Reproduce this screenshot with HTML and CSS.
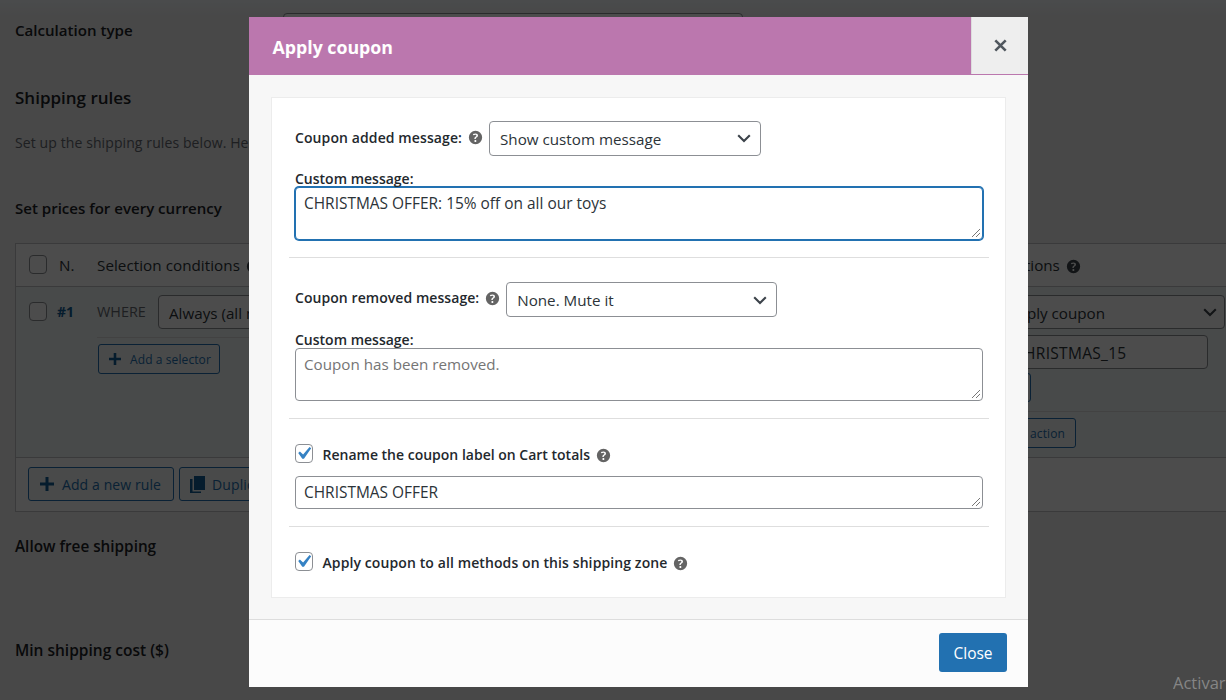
FILE: index.html
```
<!DOCTYPE html>
<html lang="en">
<head>
  <meta charset="UTF-8">
  <meta name="viewport" content="width=device-width, initial-scale=1.0">
  <title>Shipping rules</title>
  <link rel="stylesheet" href="styles.css">
</head>
<body>
  <!-- shared icons -->
  <svg class="sprite" width="0" height="0">
    <symbol id="help" viewBox="0 0 20 20">
      <path fill="currentColor" fill-rule="evenodd" d="M17 10a7 7 0 1 1-14 0 7 7 0 0 1 14 0zm-6.300 1.480h-1.900v-.390c0-.340.070-.640.210-.900.140-.250.420-.550.870-.890.420-.300.710-.550.830-.740.140-.190.200-.400.200-.640 0-.250-.090-.450-.280-.590-.190-.130-.450-.190-.790-.190-.580 0-1.250.190-2 .570l-.640-1.280c.870-.490 1.800-.740 2.770-.740.810 0 1.450.200 1.920.580.480.390.710.910.710 1.550 0 .430-.090.800-.290 1.110-.190.320-.570.670-1.110 1.060-.380.280-.610.490-.710.630-.100.150-.150.340-.150.570v.290zm-1.880 2.320c0-.350.100-.610.280-.790.180-.180.440-.270.780-.270.340 0 .600.090.780.270.180.180.280.450.280.790 0 .330-.100.590-.280.780-.180.180-.440.270-.780.270-.330 0-.590-.090-.780-.270-.180-.190-.280-.450-.280-.780z"/>
    </symbol>
    <symbol id="chevron" viewBox="0 0 14 9">
      <path fill="none" stroke="currentColor" stroke-width="2.100" d="M1.200 1.300 7 7l5.800-5.700"/>
    </symbol>
    <symbol id="plus" viewBox="0 0 14 14">
      <path fill="currentColor" d="M5.500 0h3v5.500H14v3H8.500V14h-3V8.500H0v-3h5.500z"/>
    </symbol>
    <symbol id="grip" viewBox="0 0 10 10">
      <path fill="none" stroke="currentColor" stroke-width="1" d="M1 9 9 1M5 9l4-4"/>
    </symbol>
    <symbol id="check" viewBox="0 0 20 20">
      <path fill="#3582c4" d="M14.830 4.890l1.340.940-5.810 8.380H9.020L5.780 9.670l1.340-1.250 2.570 2.400z"/>
    </symbol>
  </svg>

  <div class="page">
    <div class="field-row">
      <h3 class="calc">Calculation type</h3>
      <div class="calc-select"></div>
    </div>
    <h2>Shipping rules</h2>
    <p class="intro">Set up the shipping rules below. Here</p>
    <h3 class="currency">Set prices for every currency</h3>

    <div class="rules">
      <div class="rules-head">
        <div class="col-id"><span class="checkbox"></span><span class="num">N.</span></div>
        <div class="col-conditions">Selection conditions <svg class="help head-help"><use href="#help"/></svg></div>
        <div class="col-actions">Actions <svg class="help head-help"><use href="#help"/></svg></div>
      </div>
      <div class="rules-row">
        <div class="col-id"><span class="checkbox"></span><span class="rule-num">#1</span></div>
        <div class="col-conditions">
          <div class="line">
            <span class="where">WHERE</span>
            <div class="select always"><span>Always (all methods)</span></div>
          </div>
          <div class="split"></div>
          <div class="btn btn-small"><svg class="plus"><use href="#plus"/></svg>Add a selector</div>
        </div>
        <div class="col-actions">
          <div class="select action-select"><span>Apply coupon</span><svg class="chevron"><use href="#chevron"/></svg></div>
          <div class="input action-input">CHRISTMAS_15</div>
          <div class="btn btn-settings"></div>
          <div class="split"></div>
          <div class="btn btn-small btn-action">Add an action</div>
        </div>
      </div>
      <div class="rules-foot">
        <div class="btn"><svg class="plus"><use href="#plus"/></svg>Add a new rule</div>
        <div class="btn">
          <svg class="copy" viewBox="0 0 15 17"><path fill="currentColor" d="M4 0h11v14H4zM0 3h2.500v12.500H11V17H0z"/></svg>Duplicate
        </div>
      </div>
    </div>

    <h3 class="free">Allow free shipping</h3>
    <h3 class="min-cost">Min shipping cost ($)</h3>
  </div>

  <div class="overlay">
    <div class="modal">
      <div class="modal-header">
        <h1>Apply coupon</h1>
        <div class="modal-close">
          <svg width="13" height="13" viewBox="0 0 13 13"><path fill="none" stroke="#50575e" stroke-width="2.600" d="M1.300 1.300l10.400 10.400M11.700 1.300 1.300 11.700"/></svg>
        </div>
      </div>

      <div class="modal-body">
        <div class="card">
          <div class="group">
            <div class="line">
              <label class="wide">Coupon added message:</label>
              <svg class="help"><use href="#help"/></svg>
              <div class="select"><span>Show custom message</span><svg class="chevron"><use href="#chevron"/></svg></div>
            </div>
            <label class="custom">Custom message:</label>
            <div class="textarea focus"><span class="offer">CHRISTMAS OFFER: 15% off on all our toys</span><svg class="grip"><use href="#grip"/></svg></div>
          </div>

          <div class="group group-removed">
            <div class="line">
              <label>Coupon removed message:</label>
              <svg class="help"><use href="#help"/></svg>
              <div class="select"><span>None. Mute it</span><svg class="chevron"><use href="#chevron"/></svg></div>
            </div>
            <label class="custom">Custom message:</label>
            <div class="textarea"><span class="placeholder">Coupon has been removed.</span><svg class="grip"><use href="#grip"/></svg></div>
          </div>

          <div class="group group-rename">
            <div class="line">
              <span class="checkbox"><svg><use href="#check"/></svg></span>
              <label>Rename the coupon label on Cart totals</label>
              <svg class="help"><use href="#help"/></svg>
            </div>
            <div class="textarea single"><span class="offer">CHRISTMAS OFFER</span><svg class="grip"><use href="#grip"/></svg></div>
          </div>

          <div class="group group-all">
            <div class="line">
              <span class="checkbox"><svg><use href="#check"/></svg></span>
              <label class="wide">Apply coupon to all methods on this shipping zone</label>
              <svg class="help"><use href="#help"/></svg>
            </div>
          </div>
        </div>
      </div>

      <div class="modal-footer">
        <div class="btn-close">Close</div>
      </div>
    </div>
  </div>

  <div class="watermark">
    <div>Activar Windows</div>
    <small>Vaya a Configuración para activar Windows.</small>
  </div>
</body>
</html>
```
FILE: styles.css
```
* {
  box-sizing: border-box;
}
body {
  margin: 0;
  width: 1226px;
  height: 700px;
  overflow: hidden;
  background: #f0f0f1;
  color: #2c3338;
  font-family: "Open Sans", "Noto Sans", sans-serif;
  font-size: 15.2px;
  line-height: 20px;
}
h1, h2, h3, p {
  margin: 0;
}
svg {
  display: block;
  flex: none;
}
.sprite {
  position: absolute;
}

/* settings page */
.page {
  height: 700px;
  padding-left: 15px;
  overflow: hidden;
  display: flex;
  flex-direction: column;
  background: linear-gradient(#f8fcff, #f0f0f1 17px);
}
.page h2, .page h3 {
  color: #1d2327;
  font-weight: 600;
}
.page h3 {
  font-size: 15.2px;
}
.page h2 {
  font-size: 17px;
  margin-top: 47px;
}
.field-row {
  display: flex;
  height: 41px;
  flex: none;
}
.page .calc {
  width: 268px;
  padding-top: 20px;
  font-size: 15.100px;
}
.calc-select {
  width: 460px;
  height: 34px;
  margin-top: 13px;
  border: 1px solid #8c8f94;
  border-radius: 4px;
  background: #fff;
}
.intro {
  margin-top: 25px;
  font-size: 14px;
  letter-spacing: .1px;
  color: #646970;
}
.page .currency {
  margin-top: 45px;
  font-size: 15.050px;
}
.page .free {
  margin-top: 24px;
  font-size: 15.300px;
}
.page .min-cost {
  margin-top: 84px;
  font-size: 15.500px;
}

/* rules table */
.rules {
  flex: none;
  width: 1300px;
  margin-top: 25px;
  border: 1px solid #c3c4c7;
  background: #fff;
}
.rules-head, .rules-row {
  display: grid;
  grid-template-columns: 81px 873px 1fr;
}
.rules-head {
  height: 43px;
  align-items: center;
  border-bottom: 1px solid #c3c4c7;
}
.rules-row {
  height: 171px;
  padding-top: 8px;
  background: #f2f8f7;
  border-bottom: 1px solid #c3c4c7;
}
.rules-foot {
  display: flex;
  gap: 5px;
  height: 53px;
  padding: 9px 12px;
}
.col-id {
  display: flex;
  padding-left: 13px;
}
.num {
  padding-left: 12px;
}
.rules-row .col-id {
  padding-top: 7px;
}
.rule-num {
  padding-left: 10px;
  font-size: 14px;
  font-weight: 700;
  color: #135e96;
}
.rules-head .col-conditions, .rules-head .col-actions {
  display: flex;
  align-items: center;
}
.rules-head .col-conditions {
  letter-spacing: .05px;
}
.rules-head .col-actions {
  padding-left: 38px;
}
.help.head-help {
  width: 19px;
  height: 19px;
  margin: 2px 0 0 4px;
  color: #3c434a;
}
.rules-row .col-conditions .line {
  display: flex;
  align-items: center;
}
.where {
  width: 61px;
  font-size: 14.400px;
  color: #646970;
}
.split {
  height: 1px;
  background: #dcdcde;
}
.rules-row .col-conditions .split {
  margin: 8px 0 6px;
}
.always {
  width: 300px;
}
.action-select {
  width: 223px;
  margin-left: 32px;
}
.select.action-select {
  padding: 1px 7px 0 5px;
}
.input.action-input {
  width: 206px;
  margin: 6px 0 4px 32px;
  padding: 1px 0 0 11px;
  font-size: 15.500px;
  letter-spacing: .3px;
}
.btn.btn-settings {
  width: 29px;
  height: 29px;
  margin: 0 0 9px 32px;
}
.btn.btn-action {
  width: 106px;
  margin: 6px 0 0;
  justify-content: flex-end;
}

/* form controls */
.checkbox {
  flex: none;
  width: 18px;
  height: 19px;
  border: 1px solid #8c8f94;
  border-radius: 4px;
  background: #fff;
}
.checkbox svg {
  width: 25px;
  height: 25px;
  margin: -4px 0 0 -5px;
}
.select, .input {
  display: flex;
  align-items: center;
  height: 34px;
  padding: 1px 9px 0 10px;
  border: 1px solid #8c8f94;
  border-radius: 4px;
  background: #fff;
  white-space: nowrap;
}
.select {
  justify-content: space-between;
}
.chevron {
  width: 14px;
  height: 9px;
  margin-top: -1px;
  color: #3c434a;
}
.help {
  width: 19px;
  height: 19px;
  color: #646464;
}
.btn {
  display: flex;
  align-items: center;
  height: 34px;
  padding: 1px 12px 0 11px;
  border: 1px solid #2271b1;
  border-radius: 3px;
  color: #2271b1;
  background: #f6f7f7;
  font-size: 14px;
  letter-spacing: .1px;
  white-space: nowrap;
}
.plus {
  width: 14px;
  height: 14px;
  margin: -2px 8px 0 0;
  color: #135e96;
}
.copy {
  width: 15px;
  height: 17px;
  margin: 0 7px 0 -1px;
  color: #135e96;
}
.btn-small {
  width: 122px;
  height: 30px;
  padding: 1px 10px 0 10px;
  font-size: 12px;
}
.rules-row .col-conditions .btn-small {
  margin-left: 1px;
}
.btn-small .plus {
  width: 12px;
  height: 12px;
  margin: -2px 9px 0 0;
}

/* modal */
.overlay {
  position: absolute;
  top: 0;
  left: 0;
  width: 1226px;
  height: 700px;
  padding: 17px 0 0 249px;
  background: rgba(0, 0, 0, .7);
}
.modal {
  width: 779px;
  height: 670px;
  display: flex;
  flex-direction: column;
  background: #f7f7f7;
}
.modal-header {
  display: flex;
  justify-content: space-between;
  height: 58px;
  background: #bb77ae;
  border-bottom: 1px solid #bb77ae;
}
.modal-header h1 {
  padding: 20px 0 0 23.500px;
  font-size: 17.750px;
  font-weight: 700;
  color: #fff;
}
.modal-close {
  display: flex;
  align-items: center;
  justify-content: center;
  width: 57px;
  background: #eee;
  border-left: 1px solid #ddd;
}
.modal-body {
  height: 544px;
  padding: 22px;
}
.card {
  height: 501px;
  padding: 23px 16px 0 17px;
  background: #fff;
  border: 1px solid #ececec;
}
.group {
  height: 137px;
  padding: 0 6px;
  border-bottom: 1px solid #dedede;
}
.group .line {
  display: flex;
}
.group label {
  display: block;
  font-size: 14px;
  font-weight: 600;
  color: #23282d;
}
.group label.wide {
  letter-spacing: .1px;
}
.group .line label {
  margin-top: 7px;
}
.group .line .help {
  margin: 7px 4px 0;
}
.group .select {
  width: 272px;
  height: 35px;
}
.group .custom {
  margin-top: 13px;
}
.textarea {
  display: flex;
  justify-content: space-between;
  height: 53px;
  margin-top: -2px;
  padding: 5px 1px 1px 8px;
  border: 1px solid #8c8f94;
  border-radius: 4px;
  background: #fff;
}
.textarea.focus {
  border-color: #2271b1;
  box-shadow: 0 0 0 1px #2271b1;
}
.offer {
  font-size: 15.450px;
}
.placeholder {
  color: #757575;
}
.grip {
  align-self: flex-end;
  width: 10px;
  height: 10px;
  color: #777;
}
.group-removed {
  height: 161px;
  padding-top: 24px;
}
.group-removed .line label {
  margin-top: 6px;
  letter-spacing: .06px;
}
.group-removed .select {
  width: 271px;
}
.group-removed .chevron {
  margin-top: 0;
}
.group-rename {
  height: 108px;
  padding-top: 25px;
}
.group-all {
  border-bottom: 0;
  padding-top: 25px;
}
.group-rename .line label, .group-all .line label {
  margin: 1px 0 0 9.500px;
}
.group-rename .line .help, .group-all .line .help {
  margin-top: 2px;
}
.textarea.single {
  height: 33px;
  margin-top: 11px;
}
.modal-footer {
  display: flex;
  justify-content: flex-end;
  height: 68px;
  padding: 13px 21px;
  background: #fcfcfc;
  border-top: 1px solid #ddd;
}
.btn-close {
  width: 68px;
  height: 39px;
  border-radius: 3px;
  background: #2271b1;
  color: #fff;
  font-size: 15.500px;
  line-height: 40px;
  text-align: center;
}

.watermark {
  position: absolute;
  left: 1173px;
  top: 672px;
  width: 53px;
  height: 28px;
  overflow: hidden;
  white-space: nowrap;
  color: #858585;
  font-size: 16.500px;
  line-height: 22px;
}
.watermark small {
  display: block;
  margin-top: -1px;
  font-size: 13px;
}
```
